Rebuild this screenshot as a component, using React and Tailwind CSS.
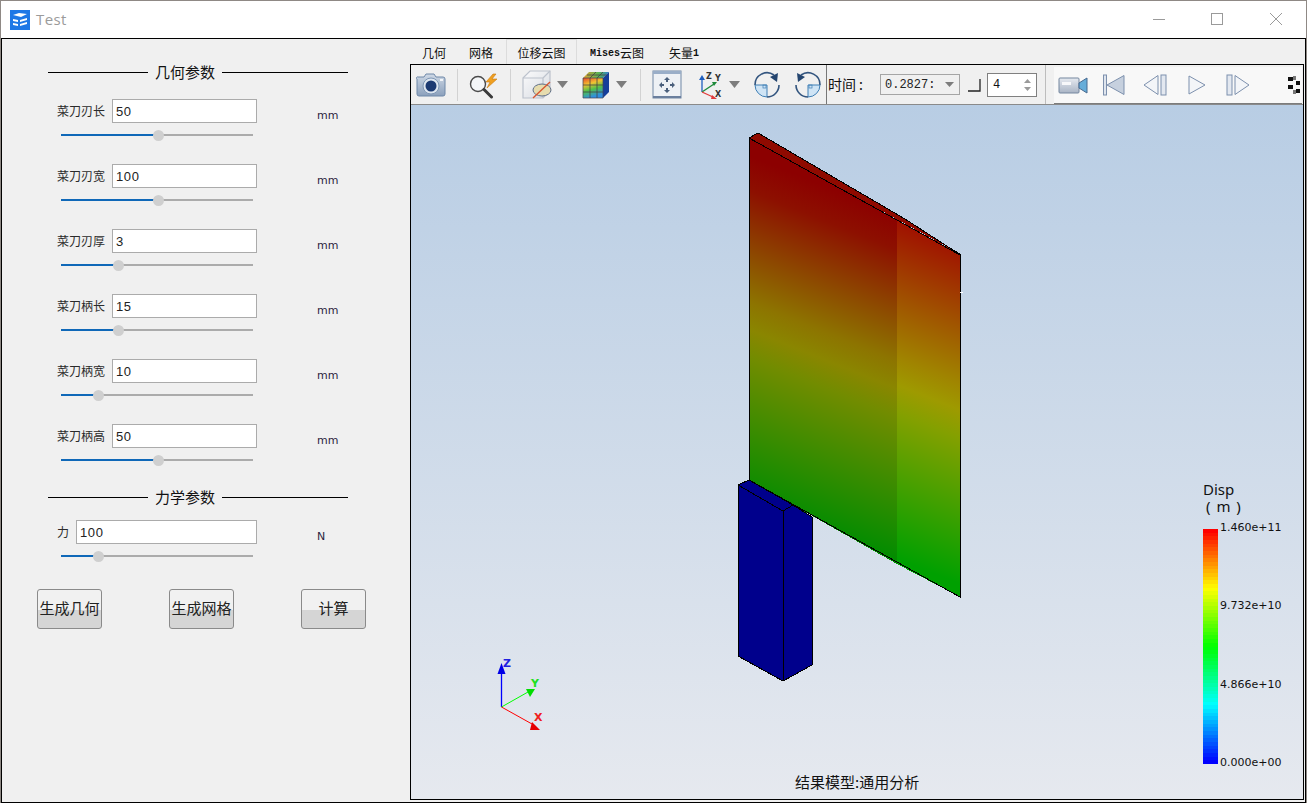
import React from "react";

const CJK = "font-['Noto_Sans_CJK_SC','Liberation_Sans',sans-serif]";

const rows = [
  { label: "菜刀刃长", value: "50", unit: "mm", pos: 97 },
  { label: "菜刀刃宽", value: "100", unit: "mm", pos: 97 },
  { label: "菜刀刃厚", value: "3", unit: "mm", pos: 57 },
  { label: "菜刀柄长", value: "15", unit: "mm", pos: 57 },
  { label: "菜刀柄宽", value: "10", unit: "mm", pos: 37 },
  { label: "菜刀柄高", value: "50", unit: "mm", pos: 97 },
];

function SectionHeader({ children }) {
  return (
    <div className="ml-[46px] flex h-[24px] w-[300px] items-center">
      <div className="h-px w-[100px] bg-black" />
      <div className={`flex-1 pb-[2px] text-center text-[15px] leading-none text-[#111] ${CJK}`}>{children}</div>
      <div className="h-px w-[126px] bg-black" />
    </div>
  );
}

function Slider({ pos }) {
  return (
    <div className="relative ml-[59px] mt-[6px] flex h-[12px] w-[192px] items-center">
      <div className="h-[2px] bg-[#0f68b8]" style={{ width: pos }} />
      <div className="h-[2px] flex-1 bg-[#ababab]" />
      <div className="absolute top-[1px] h-[11px] w-[11px] rounded-full bg-[#cfcfcf]" style={{ left: pos - 5 }} />
    </div>
  );
}

function ParamRow({ label, value, unit, pos, inputW, labelW }) {
  return (
    <div>
      <div className="flex h-[24px] items-center">
        <div className={`ml-[55px] text-[12px] leading-none text-[#2b2b2b] whitespace-nowrap ${CJK} ${labelW}`}>{label}</div>
        <div className={`flex h-[24px] items-center border border-[#ababab] bg-white pl-[3px] pt-[1px] text-[13px] tracking-[0.6px] text-[#222] font-['Liberation_Sans',sans-serif] ${inputW}`}>
          {value}
        </div>
        <div className="ml-[60px] mt-[10px] text-[11px] text-[#2c2440] font-['DejaVu_Sans',sans-serif]">{unit}</div>
      </div>
      <Slider pos={pos} />
    </div>
  );
}

function Btn({ children }) {
  return (
    <div className={`flex h-[40px] w-[65px] items-center justify-center whitespace-nowrap rounded-[3px] border border-[#8a8a8a] bg-[linear-gradient(#f1f1f1_0,#f1f1f1_52%,#d5d5d5_52%,#d5d5d5_100%)] pb-[4px] text-[15px] leading-none text-[#222] ${CJK}`}>
      {children}
    </div>
  );
}

function LeftPanel() {
  return (
    <div className="w-[408px] shrink-0 pt-[21px]">
      <SectionHeader>几何参数</SectionHeader>
      <div className="mt-[15px] flex flex-col gap-[23px]">
        {rows.map((r) => (
          <ParamRow key={r.label} {...r} labelW="w-[55px]" inputW="w-[145px]" />
        ))}
      </div>
      <div className="mt-[19px]">
        <SectionHeader>力学参数</SectionHeader>
      </div>
      <div className="mt-[11px]">
        <ParamRow label="力" value="100" unit="N" pos={37} labelW="w-[19px]" inputW="w-[181px]" />
      </div>
      <div className="ml-[35px] mt-[27px] flex w-[329px] justify-between">
        <Btn>生成几何</Btn>
        <Btn>生成网格</Btn>
        <Btn>计算</Btn>
      </div>
    </div>
  );
}

function Tabs() {
  const base = "flex items-center justify-center whitespace-nowrap pt-[2px] text-[12px] text-[#111]";
  return (
    <div className={`flex h-[25px] items-end ${CJK}`}>
      <div className={`${base} ml-[12px] h-[24px] w-[24px]`}>几何</div>
      <div className={`${base} ml-[23px] h-[24px] w-[24px]`}>网格</div>
      <div className={`${base} ml-[13px] h-[25px] w-[71px] border-x border-t border-[#dcdcdc]`}>位移云图</div>
      <div className={`${base} ml-[12px] h-[24px] w-[56px]`}>
        <span className="font-['Liberation_Mono',monospace] text-[10px] font-bold">Mises</span>云图
      </div>
      <div className={`${base} ml-[24px] h-[24px] w-[30px]`}>
        矢量<span className="font-['Liberation_Mono',monospace] text-[10px] font-bold">1</span>
      </div>
    </div>
  );
}

function Sep() {
  return <div className="ml-[11px] h-[32px] w-px bg-[#d2d2d2]" />;
}

function Drop({ cls }) {
  return (
    <svg width="11" height="7" viewBox="0 0 11 7" className={cls}>
      <path d="M0 0h11L5.500 7z" fill="#7d7d7d" />
    </svg>
  );
}

const CameraIcon = () => (
  <svg width="30" height="26" viewBox="0 0 30 26" className="ml-[5px]">
    <defs>
      <linearGradient id="camb" x1="0" y1="0" x2="0" y2="1">
        <stop offset="0" stopColor="#cfd9e6" />
        <stop offset="1" stopColor="#8ba0bc" />
      </linearGradient>
    </defs>
    <path d="M2 5h6l2-3h8l2 3h7a2 2 0 0 1 2 2v15a2 2 0 0 1-2 2H3a2 2 0 0 1-2-2V7a1 1 0 0 1 1-2z" fill="url(#camb)" stroke="#6f88a8" />
    <circle cx="15" cy="14" r="8" fill="#dfe7f0" stroke="#7f97b5" />
    <circle cx="15" cy="14" r="5.500" fill="#1c3a72" />
    <rect x="24" y="7" width="3" height="2" fill="#f2f5f9" />
  </svg>
);

const SearchIcon = () => (
  <svg width="30" height="28" viewBox="0 0 30 28" className="ml-[11px]">
    <path d="M24 3l-7 8h4l-3 6 10-9h-5l4-5z" fill="#f0a020" stroke="#c87a10" strokeWidth="0.6" />
    <circle cx="9" cy="13" r="7.500" fill="#f4f6f8" stroke="#4a4a4a" strokeWidth="1.400" />
    <path d="M15 18.500L22.500 26" stroke="#3a3a3a" strokeWidth="3" strokeLinecap="round" />
  </svg>
);

const CubeIcon = () => (
  <svg width="30" height="30" viewBox="0 0 30 30" className="ml-[11px]">
    <defs>
      <linearGradient id="cubef" x1="0" y1="0" x2="1" y2="1">
        <stop offset="0" stopColor="#fbfbfc" />
        <stop offset="1" stopColor="#d6dae1" />
      </linearGradient>
    </defs>
    <path d="M1 8l7-7h20v20l-7 7H1z" fill="url(#cubef)" stroke="#bcc2cc" strokeWidth="1.200" />
    <path d="M1 8h20v20M21 8l7-7" fill="none" stroke="#bcc2cc" strokeWidth="1.200" />
    <ellipse cx="20" cy="20" rx="9" ry="6" fill="#e6dcae" stroke="#5f6f88" />
    <path d="M11 28L28 12" stroke="#d8552e" strokeWidth="1.300" />
  </svg>
);

const ColorCube = () => (
  <svg width="30" height="30" viewBox="0 0 30 30" className="ml-[13px]">
    <defs>
      <linearGradient id="ccf" x1="0" y1="0" x2="0.3" y2="1">
        <stop offset="0" stopColor="#e8452a" />
        <stop offset="0.35" stopColor="#f1c232" />
        <stop offset="0.65" stopColor="#4fc04a" />
        <stop offset="1" stopColor="#2f8fe0" />
      </linearGradient>
      <linearGradient id="cct" x1="0" y1="0" x2="1" y2="0">
        <stop offset="0" stopColor="#e0a030" />
        <stop offset="0.6" stopColor="#59b552" />
        <stop offset="1" stopColor="#2c7fd0" />
      </linearGradient>
    </defs>
    <path d="M2 8h20v20H2z" fill="url(#ccf)" />
    <path d="M2 8l6-6h20L22 8z" fill="url(#cct)" />
    <path d="M22 8l6-6v20l-6 6z" fill="#163f9a" />
    <path d="M9 8v20M16 8v20M2 15h20M2 22h20M9 8l6-6M16 8l6-6M6 5h20" stroke="#444" strokeWidth="0.8" fill="none" />
    <path d="M2 8h20v20H2z" fill="none" stroke="#445" strokeWidth="0.7" />
  </svg>
);

const FitIcon = () => (
  <svg width="30" height="29" viewBox="0 0 30 29" className="ml-[11px]">
    <rect x="1" y="1" width="28" height="27" fill="#eef1f5" stroke="#7187a5" />
    <rect x="1" y="1" width="28" height="3" fill="#9aaec8" />
    <rect x="1" y="26" width="28" height="2" fill="#6a7f9e" />
    <path d="M15 7l-3 3h2v2h2v-2h2zM15 23l3-3h-2v-2h-2v2h-2zM7 15l3-3v2h2v2h-2v2zM23 15l-3-3v2h-2v2h2v2z" fill="#4a5f7c" />
  </svg>
);

const AxesIcon = () => (
  <svg width="28" height="28" viewBox="0 0 28 28" className="ml-[14px] font-['DejaVu_Sans',sans-serif]">
    <path d="M6 21V8" stroke="#1f5fbf" strokeWidth="1.300" />
    <path d="M6 4l-3 5h6z" fill="#1f5fbf" />
    <path d="M6 21l12-8" stroke="#1e8a3a" strokeWidth="1.300" />
    <path d="M21 11l-5 0 2 4z" fill="#1e8a3a" />
    <path d="M6 21l11 5" stroke="#e23a3a" strokeWidth="1.300" />
    <path d="M21 28l-5-4-1 4z" fill="#e23a3a" />
    <text x="10" y="8" fontSize="8" fontWeight="700" fill="#333">Z</text>
    <text x="19" y="10" fontSize="8" fontWeight="700" fill="#333">Y</text>
    <text x="19" y="26" fontSize="8" fontWeight="700" fill="#333">X</text>
  </svg>
);

const RotIcon = ({ flip, cls }) => (
  <svg width="28" height="28" viewBox="0 0 28 28" className={cls}>
    <g transform={flip ? "translate(28 0) scale(-1 1)" : undefined}>
      <path d="M14 14H2a12 12 0 0 0 12 12z" fill="#cfe4f5" stroke="#3f7fb5" />
      <rect x="10" y="14" width="3" height="3" fill="none" stroke="#3f7fb5" strokeWidth="0.7" />
      <path d="M2 14A12 12 0 0 1 21 4" fill="none" stroke="#33557f" strokeWidth="1.600" />
      <path d="M26 14A12 12 0 0 1 14 26" fill="none" stroke="#33557f" strokeWidth="1.600" />
      <path d="M25 2l-1 9-7-5z" fill="#24456f" />
    </g>
  </svg>
);

const VideoIcon = () => (
  <svg width="30" height="18" viewBox="0 0 30 18" className="ml-[4px]">
    <defs>
      <linearGradient id="vidb" x1="0" y1="0" x2="0" y2="1">
        <stop offset="0" stopColor="#e6eaf0" />
        <stop offset="1" stopColor="#a9b4c5" />
      </linearGradient>
    </defs>
    <rect x="1" y="2" width="20" height="15" rx="1" fill="url(#vidb)" stroke="#75879f" />
    <rect x="4" y="6" width="9" height="3" fill="#f7f8fa" />
    <path d="M21 7l8-5v15l-8-5z" fill="#66add9" stroke="#47698f" />
  </svg>
);

const stepStroke = "#7d90ad";
const StepFirst = () => (
  <svg width="22" height="22" viewBox="0 0 22 22" className="ml-[15px]">
    <rect x="0.500" y="1" width="3" height="20" fill="#dfe5ee" stroke={stepStroke} />
    <path d="M21 1.500V20.500L4 11z" fill="#c6d0de" stroke={stepStroke} />
  </svg>
);
const StepPrev = () => (
  <svg width="24" height="22" viewBox="0 0 24 22" className="ml-[18px]">
    <path d="M15 1.500V20.500L1 11z" fill="#f3f5f8" stroke={stepStroke} />
    <rect x="18" y="1" width="5" height="20" fill="#e3e8f0" stroke={stepStroke} />
  </svg>
);
const PlayIcon = () => (
  <svg width="18" height="20" viewBox="0 0 18 20" className="ml-[21px]">
    <path d="M1 1V19L17 10z" fill="#f3f5f8" stroke={stepStroke} />
  </svg>
);
const StepNext = () => (
  <svg width="24" height="22" viewBox="0 0 24 22" className="ml-[20px]">
    <rect x="1" y="1" width="5" height="20" fill="#e3e8f0" stroke={stepStroke} />
    <path d="M9 1.500V20.500L23 11z" fill="#f3f5f8" stroke={stepStroke} />
  </svg>
);
const Chevrons = () => (
  <svg width="12" height="18" viewBox="0 0 12 18" className="ml-[38px]">
    <path d="M0 1h5v4H0zM8 5h4v4H8zM0 9h5v4H0zM8 13h4v4H8z" fill="#111" />
    <path d="M5 0h3v4H5zM5 14h3v4H5z" fill="#777" />
  </svg>
);

function Toolbar() {
  return (
    <div className="flex h-[40px] items-center border-b border-[#8a8a8a] bg-[#f0f0f0]">
      <CameraIcon />
      <Sep />
      <SearchIcon />
      <Sep />
      <CubeIcon />
      <Drop cls="ml-[5px]" />
      <ColorCube />
      <Drop cls="ml-[5px]" />
      <div className="ml-[13px] h-[32px] w-px bg-[#d2d2d2]" />
      <FitIcon />
      <AxesIcon />
      <Drop cls="ml-[5px]" />
      <RotIcon cls="ml-[13px]" />
      <RotIcon flip cls="ml-[13px]" />
      <div className="ml-[4px] h-full w-px bg-[#777]" />
      <div className={`ml-[1px] w-[38px] whitespace-nowrap text-[14px] text-[#111] ${CJK}`}>
        时间<span className="ml-[3px]">:</span>
      </div>
      <div className="ml-[14px] flex h-[21px] w-[80px] items-center border border-[#a5a5a5] bg-[#f0f0f0] pl-[4px]">
        <div className="w-[52px] overflow-hidden whitespace-nowrap font-['Liberation_Mono',monospace] text-[12px] text-[#222]">0.2827:</div>
        <svg width="9" height="5" viewBox="0 0 9 5" className="ml-[8px]"><path d="M0 0h9L4.500 5z" fill="#7d7d7d" /></svg>
      </div>
      <svg width="14" height="14" viewBox="0 0 14 14" className="ml-[7px]">
        <path d="M1 13H13V1" fill="none" stroke="#222" strokeWidth="1.300" />
      </svg>
      <div className="ml-[6px] flex h-[24px] w-[50px] items-center justify-between border border-[#808080] bg-white pl-[5px] pr-[5px] font-['Liberation_Mono',monospace] text-[12px] text-[#111]">
        <span>4</span>
        <svg width="7" height="14" viewBox="0 0 7 14"><path d="M3.500 1L7 5H0zM3.500 13L0 9h7z" fill="#9a9a9a" /></svg>
      </div>
      <div className="ml-[8px] h-full w-px bg-[#bdbdbd]" />
      <div className="ml-[8px] flex h-[37px] w-[248px] items-center self-end border-b border-[#7c7c7c] bg-[#f8f8f8]">
        <VideoIcon />
        <StepFirst />
        <StepPrev />
        <PlayIcon />
        <StepNext />
        <Chevrons />
      </div>
    </div>
  );
}

function Model() {
  return (
    <svg className="absolute inset-0 h-full w-full" viewBox="411 105 892 694" preserveAspectRatio="xMinYMin slice">
      <defs>
        <linearGradient id="bladeA" gradientUnits="userSpaceOnUse" x1="860" y1="200" x2="740" y2="500">
          <stop offset="0" stopColor="#8c0000" />
          <stop offset="0.1" stopColor="#8d1000" />
          <stop offset="0.42" stopColor="#8d7400" />
          <stop offset="0.5" stopColor="#8a8600" />
          <stop offset="0.58" stopColor="#728c00" />
          <stop offset="1" stopColor="#008c00" />
        </linearGradient>
        <linearGradient id="bladeB" gradientUnits="userSpaceOnUse" x1="920" y1="220" x2="800" y2="520">
          <stop offset="0" stopColor="#a00800" />
          <stop offset="0.42" stopColor="#a08400" />
          <stop offset="0.5" stopColor="#9e9a00" />
          <stop offset="0.58" stopColor="#84a000" />
          <stop offset="1" stopColor="#00a000" />
        </linearGradient>
      </defs>
      <g shapeRendering="crispEdges">
        <polygon points="749,138 758,133 905,219 953,250 960,254" fill="#8f0a00" />
        <polygon points="749,138 897,220 897,564 749,480" fill="url(#bladeA)" />
        <polygon points="897,220 960,254 960,597 897,564" fill="url(#bladeB)" />
        <polyline points="758,133 905,219 953,250 960,254 960,597 749,480 749,138 758,133" fill="none" stroke="#000" strokeWidth="1" />
        <line x1="749" y1="138" x2="960" y2="255" stroke="#000" strokeWidth="1" />
        <line x1="960" y1="292" x2="963" y2="292" stroke="#fff" strokeWidth="1" />
        <polygon points="738,485 749,480 793,505 812,517 812,665 783,681 738,656" fill="#00008c" stroke="#000" strokeWidth="1" />
        <polyline points="738,485 783,511 793,505" fill="none" stroke="#000" strokeWidth="1" />
        <line x1="783" y1="511" x2="783" y2="681" stroke="#000" strokeWidth="1" />
      </g>
      <g>
        <line x1="501.500" y1="707" x2="501.500" y2="670" stroke="#0000ff" strokeWidth="1.300" />
        <path d="M501.500 663l-4 11h8z" fill="#0000e6" />
        <line x1="501.500" y1="707" x2="528" y2="692" stroke="#00ff00" strokeWidth="1" />
        <path d="M526 689l9 0-5 8z" fill="#00dd00" />
        <line x1="501.500" y1="707" x2="532" y2="724" stroke="#ff0000" strokeWidth="1" />
        <path d="M530 730l2-8 8 8z" fill="#e60000" />
        <text x="503" y="667" fontSize="11" fontWeight="700" fill="#2020e0" fontFamily="DejaVu Sans">Z</text>
        <text x="531" y="687" fontSize="11" fontWeight="700" fill="#20e020" fontFamily="DejaVu Sans">Y</text>
        <text x="534" y="721" fontSize="11" fontWeight="700" fill="#f02020" fontFamily="DejaVu Sans">X</text>
      </g>
    </svg>
  );
}

function bandColor(i, n) {
  const t = 1 - i / (n - 1);
  const seg = t * 4;
  let r = 0, g = 0, b = 0;
  if (seg < 1) { g = seg; b = 1; }
  else if (seg < 2) { g = 1; b = 2 - seg; }
  else if (seg < 3) { r = seg - 2; g = 1; }
  else { r = 1; g = 4 - seg; }
  return `rgb(${Math.round(r * 255)},${Math.round(g * 255)},${Math.round(b * 255)})`;
}

function Legend() {
  const n = 64;
  return (
    <div className="absolute left-[792px] top-[376px] font-['DejaVu_Sans',sans-serif] text-[#111]">
      <div className="text-[15px] leading-[17px] font-['Noto_Sans',sans-serif]">Disp</div>
      <div className="pl-[3px] text-[15px] leading-[17px] [word-spacing:2px] font-['Noto_Sans',sans-serif]">( m )</div>
      <div className="mt-[14px] flex h-[235px]">
        <div className="flex w-[15px] flex-col">
          {Array.from({ length: n }, (_, i) => (
            <div key={i} className="flex-1" style={{ background: bandColor(i, n) }} />
          ))}
        </div>
        <div className="ml-[2px] mt-[-8px] flex h-[248px] flex-col justify-between text-[11px] leading-[13px]">
          <div>1.460e+11</div>
          <div>9.732e+10</div>
          <div>4.866e+10</div>
          <div>0.000e+00</div>
        </div>
      </div>
    </div>
  );
}

function Viewport() {
  return (
    <div className="relative flex-1 overflow-hidden bg-[linear-gradient(#b8cde4,#e6e9ef)]">
      <Model />
      <Legend />
      <div className={`absolute bottom-[8px] left-[384px] whitespace-nowrap text-[15px] leading-[18px] text-[#111] ${CJK}`}>结果模型:通用分析</div>
    </div>
  );
}

function TitleBar() {
  return (
    <div className="flex h-[37px] items-center bg-white">
      <svg width="20" height="20" viewBox="0 0 20 20" className="ml-[9px]">
        <rect width="20" height="20" fill="#1f78e6" />
        <path d="M3 5l6-2 8 1-6 3zM3 9l5 1v2l-5-1zM10 10l7-2v2l-7 2zM3 13l5 1v2l-5-1zM10 14l7-2v2l-7 2z" fill="#fff" />
      </svg>
      <div className="ml-[6px] text-[15px] tracking-[0.4px] text-[#9b9b9b] font-['Open_Sans',sans-serif]">Test</div>
      <svg width="130" height="13" viewBox="0 0 130 13" className="ml-auto mr-[24px]" fill="none" stroke="#9a9a9a">
        <path d="M1 6.500H13" />
        <rect x="59.500" y="0.500" width="11" height="11" />
        <path d="M118 0L130 12M130 0L118 12" />
      </svg>
    </div>
  );
}

export default function App() {
  return (
    <div className="flex h-[803px] w-[1307px] flex-col overflow-hidden border-x border-t border-[#8f8985] bg-[#f0f0f0]">
      <TitleBar />
      <div className="flex h-[765px] border border-black">
        <LeftPanel />
        <div className="flex w-[894px] flex-col">
          <Tabs />
          <div className="flex h-[736px] flex-col border border-black">
            <Toolbar />
            <Viewport />
          </div>
        </div>
      </div>
    </div>
  );
}
